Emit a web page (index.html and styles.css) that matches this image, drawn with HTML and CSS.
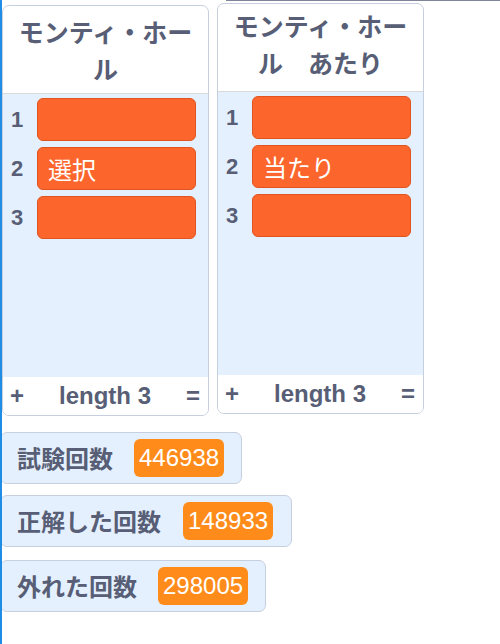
FILE: index.html
```html
<!DOCTYPE html>
<html lang="ja">
<head>
<meta charset="utf-8">
<link rel="stylesheet" href="styles.css">
</head>
<body>
<div class="stage">
  <div class="edge-top"></div>
  <div class="edge-left"></div>

  <div class="list-monitor list-a">
    <div class="list-header">モンティ・ホー<br>ル</div>
    <div class="list-body">
      <div class="row"><span class="idx">1</span><div class="item"></div></div>
      <div class="row"><span class="idx">2</span><div class="item">選択</div></div>
      <div class="row"><span class="idx">3</span><div class="item"></div></div>
    </div>
    <div class="list-footer"><span>+</span><span>length 3</span><span>=</span></div>
  </div>

  <div class="list-monitor list-b">
    <div class="list-header header-b">モンティ・ホー<br>ル　あたり</div>
    <div class="list-body">
      <div class="row"><span class="idx">1</span><div class="item"></div></div>
      <div class="row"><span class="idx">2</span><div class="item">当たり</div></div>
      <div class="row"><span class="idx">3</span><div class="item"></div></div>
    </div>
    <div class="list-footer"><span>+</span><span>length 3</span><span>=</span></div>
  </div>

  <div class="var-monitor var-a"><span class="label">試験回数</span><span class="value">446938</span></div>
  <div class="var-monitor var-b"><span class="label">正解した回数</span><span class="value">148933</span></div>
  <div class="var-monitor var-c"><span class="label">外れた回数</span><span class="value">298005</span></div>
</div>
</body>
</html>
```
FILE: styles.css
```css
html, body {
  margin: 0;
  padding: 0;
  background: #ffffff;
}
.stage {
  position: relative;
  width: 500px;
  height: 644px;
  overflow: hidden;
  background: #ffffff;
  font-family: "Liberation Sans", "Noto Sans CJK JP", sans-serif;
  color: #575e75;
}
.edge-top {
  position: absolute;
  left: 226px;
  top: 0;
  right: 0;
  height: 1px;
  background: #7f8598;
}
.edge-left {
  position: absolute;
  left: 0;
  top: 0;
  bottom: 0;
  width: 2px;
  background: #1f8ce6;
  z-index: 5;
}
.list-monitor {
  position: absolute;
  width: 205px;
  height: 409px;
  border: 1px solid #c6cfdd;
  border-radius: 7px;
  background: #ffffff;
  display: flex;
  flex-direction: column;
  overflow: hidden;
}
.list-a { left: 2px; top: 5px; }
.list-b { left: 217px; top: 3px; }
.list-header {
  height: 74px;
  padding: 7px 0 6px;
  border-bottom: 1px solid #d9d9d9;
  text-align: center;
  font-family: "Noto Sans CJK JP", sans-serif;
  font-weight: 700;
  font-size: 25px;
  line-height: 37px;
  white-space: nowrap;
}
.header-b {
  padding-top: 3px;
  padding-bottom: 10px;
}
.list-body {
  flex: 1;
  background: #e5f0ff;
  padding-top: 4px;
  display: flex;
  flex-direction: column;
  gap: 6px;
}
.row {
  display: flex;
  align-items: center;
  height: 43px;
}
.idx {
  width: 28px;
  margin-right: 6px;
  text-align: center;
  font-weight: 700;
  font-size: 22px;
}
.item {
  width: 147px;
  height: 41px;
  border: 1px solid #e0551f;
  border-radius: 6px;
  background: #fc662c;
  color: #ffffff;
  font-family: "Noto Sans CJK JP", sans-serif;
  font-size: 24px;
  line-height: 41px;
  padding-left: 10px;
}
.list-footer {
  height: 38px;
  background: #ffffff;
  display: flex;
  align-items: center;
  justify-content: space-between;
  padding: 0 8px 0 7px;
  font-weight: 700;
  font-size: 24px;
}
.var-monitor {
  position: absolute;
  left: 0;
  display: flex;
  align-items: center;
  gap: 21px;
  padding: 6px 17px 6px 16px;
  border: 1px solid #c6cfdd;
  border-radius: 7px;
  background: #e5f0ff;
}
.var-a { top: 432px; }
.var-b { top: 495px; gap: 22px; padding-right: 18px; }
.var-c { top: 560px; }
.label {
  font-family: "Noto Sans CJK JP", sans-serif;
  font-weight: 700;
  font-size: 24px;
  line-height: 38px;
}
.value {
  height: 38px;
  line-height: 38px;
  padding: 0 5px;
  border-radius: 6px;
  background: #ff8c1a;
  color: #ffffff;
  font-family: "Liberation Sans", sans-serif;
  font-size: 24px;
}
```
